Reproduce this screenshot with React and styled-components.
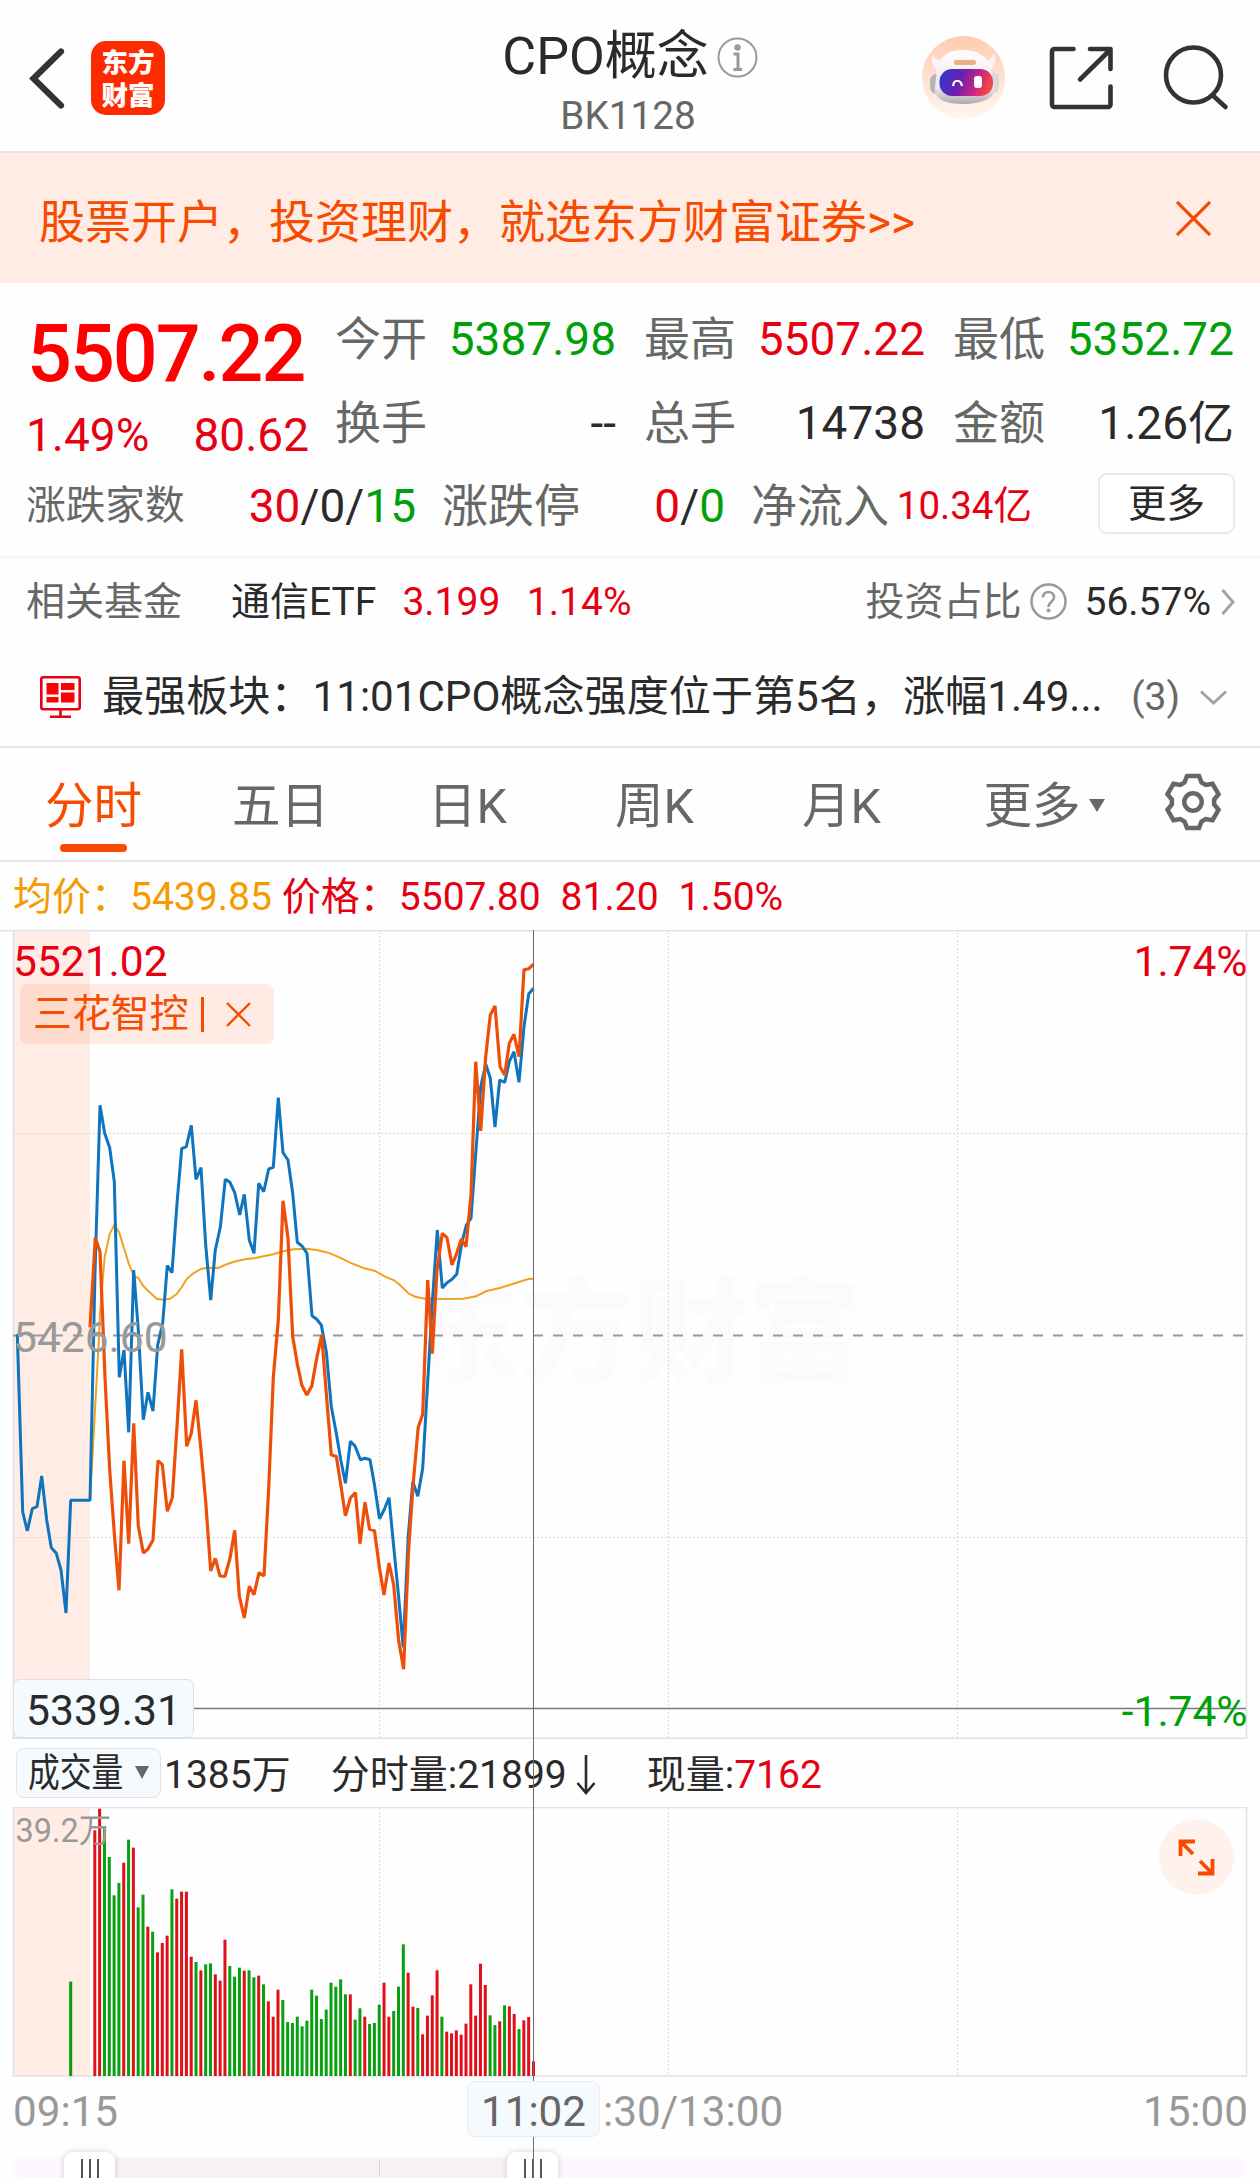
import React from "react";
import styled, { createGlobalStyle } from "styled-components";

const RED = "#e60012";
const GREEN = "#00a00a";
const ORANGE = "#f64b00";
const INK = "#2a2a2a";
const GREY = "#666866";
const MUTE = "#999999";

const Global = createGlobalStyle`
  * { box-sizing: border-box; }
  html, body { margin: 0; padding: 0; background: #fefefe; }
  body { font-family: Roboto, "Noto Sans CJK SC", sans-serif; color: ${INK}; }
`;

const Page = styled.main`
  width: 1260px;
  height: 2178px;
  overflow: hidden;
  background: #fefefe;
  display: flex;
  flex-direction: column;
`;

/* ---------- header ---------- */
const Header = styled.header`
  height: 153px;
  flex: none;
  border-bottom: 2px solid #e6e4e6;
  display: grid;
  grid-template-columns: 400px 1fr 400px;
`;
const HeaderLeft = styled.div`
  display: flex;
  align-items: center;
  padding: 4px 0 0 28px;
  gap: 25px;
`;
const Logo = styled.div`
  width: 74px;
  height: 74px;
  border-radius: 15px;
  background: #ff2a00;
  color: #fff;
  font: 900 26.5px/33px Roboto, "Noto Sans CJK SC", sans-serif;
  text-align: center;
  padding-top: 5px;
`;
const HeaderTitle = styled.div`
  display: flex;
  flex-direction: column;
  align-items: center;
  padding-top: 27px;
`;
const TitleLine = styled.div`
  display: flex;
  align-items: center;
  gap: 8px;
  font-size: 52px;
  line-height: 60px;
`;
const Code = styled.div`
  font-size: 38.7px;
  line-height: 48px;
  color: ${GREY};
  margin-top: 5px;
  padding-right: 4px;
`;
const HeaderRight = styled.div`
  display: flex;
  align-items: center;
  justify-content: flex-end;
  padding: 4px 29.5px 0 0;
`;

/* ---------- promotion banner ---------- */
const Banner = styled.div`
  height: 130px;
  flex: none;
  background: #ffede5;
  color: ${ORANGE};
  display: flex;
  align-items: center;
  justify-content: space-between;
  padding: 0 49px 0 39px;
  font-size: 46px;
  line-height: 60px;
`;
const BannerText = styled.span`
  padding-top: 7px;
`;

/* ---------- quote ---------- */
const Quote = styled.section`
  height: 275px;
  flex: none;
  border-bottom: 2px solid #f5f5f6;
  padding: 14px 25px 0 26px;
`;
const QuoteTop = styled.div`
  display: grid;
  grid-template-columns: 309px 1fr;
`;
const Latest = styled.div`
  width: 283px;
`;
const Price = styled.div`
  color: #ff0000;
  font-size: 79px;
  font-weight: 500;
  line-height: 80px;
  letter-spacing: -2px;
  margin-top: 17px;
  padding-left: 1px;
`;
const Change = styled.div`
  display: flex;
  justify-content: space-between;
  color: ${RED};
  font-size: 46px;
  line-height: 60px;
  margin-top: 11px;
`;
const Stats = styled.div`
  display: grid;
  grid-template-columns: repeat(3, 281px);
  column-gap: 28px;
`;
const Stat = styled.div`
  display: flex;
  justify-content: space-between;
  align-items: center;
  font-size: 46px;
  line-height: 82px;
`;
const Label = styled.span`
  color: ${GREY};
  font-size: ${(p) => p.$size || 46}px;
`;
const Value = styled.span`
  color: ${(p) => p.$color || INK};
  font-size: ${(p) => p.$size || 46}px;
`;
const QuoteBottom = styled.div`
  display: grid;
  grid-template-columns: 390px 283px 281px 1fr;
  column-gap: 26px;
`;
const MoreButton = styled.button`
  justify-self: end;
  width: 137px;
  height: 61px;
  margin: 8px 0 0;
  padding: 0;
  border: 2px solid #e9e9ec;
  border-radius: 9px;
  background: #fff;
  color: ${INK};
  font: 38.5px/57px Roboto, "Noto Sans CJK SC", sans-serif;
`;

/* ---------- related fund and news rows ---------- */
const FundRow = styled.div`
  height: 86px;
  flex: none;
  display: flex;
  align-items: center;
  padding: 1px 25px 0 26px;
  font-size: 39px;
  line-height: 60px;
`;
const FundName = styled.span`
  margin: 0 26px 0 49px;
`;
const FundFigures = styled.span`
  display: flex;
  gap: 26.5px;
  color: ${RED};
`;
const FundShare = styled.span`
  margin-left: auto;
  display: flex;
  align-items: center;
`;
const ShareValue = styled.span`
  margin: 0 10px 0 17px;
`;
const NewsRow = styled.div`
  height: 104px;
  flex: none;
  border-bottom: 2px solid #e5e5e8;
  display: flex;
  align-items: center;
  padding: 4px 33px 0 40px;
  font-size: 42.12px;
  line-height: 60px;
  white-space: nowrap;
`;
const NewsText = styled.span`
  margin-left: 21px;
`;
const NewsCount = styled.span`
  margin: 0 20px 0 auto;
  font-size: 39px;
  color: ${GREY};
`;

/* ---------- tabs ---------- */
const Tabs = styled.nav`
  height: 114px;
  flex: none;
  border-bottom: 2px solid #e5e5e8;
  display: grid;
  grid-template-columns: repeat(6, 187px) 140px;
`;
const Tab = styled.div`
  position: relative;
  display: flex;
  align-items: center;
  justify-content: center;
  gap: 8px;
  padding: 5px 0 0 ${(p) => p.$indent || 0}px;
  font-size: 48.5px;
  line-height: 60px;
  color: ${(p) => (p.$active ? ORANGE : GREY)};
  &::after {
    content: "";
    display: ${(p) => (p.$active ? "block" : "none")};
    position: absolute;
    left: 60px;
    bottom: 8px;
    width: 67px;
    height: 8px;
    border-radius: 4px;
    background: ${ORANGE};
  }
`;
const Triangle = styled.i`
  width: 0;
  height: 0;
  border: ${(p) => p.$half}px solid transparent;
  border-top: 13px solid ${GREY};
  border-bottom: 0;
  margin-bottom: ${(p) => p.$lift || 0}px;
`;
const GearSlot = styled.div`
  padding: 24px 0 0 41px;
  line-height: 0;
`;

/* ---------- chart ---------- */
const InfoLine = styled.div`
  height: 68px;
  flex: none;
  display: flex;
  align-items: center;
  gap: 20px;
  padding: 1px 0 0 13px;
  font-size: 39px;
  line-height: 60px;
  color: ${RED};
`;
const Average = styled.span`
  color: #f59a00;
  margin-right: -10px;
`;
const Charts = styled.section`
  position: relative;
  flex: 1;
`;
const Plot = styled.div`
  position: relative;
  height: ${(p) => p.$height}px;
`;
const Drawing = styled.svg`
  display: block;
`;
const AxisLabel = styled.span`
  position: absolute;
  top: ${(p) => p.$top}px;
  ${(p) => (p.$right ? "right: 12.5px;" : `left: ${p.$left || 13}px;`)}
  color: ${(p) => p.$color};
  font-size: ${(p) => p.$size || 42.5}px;
  line-height: 50px;
`;
const Watermark = styled.span`
  position: absolute;
  left: 406px;
  top: 324px;
  font: 900 114px/140px "Noto Sans CJK SC", sans-serif;
  color: #fdfafd;
`;
const StockTag = styled.div`
  position: absolute;
  left: 20px;
  top: 54px;
  width: 254px;
  height: 60px;
  border-radius: 7px;
  background: rgba(255, 70, 0, 0.1);
  color: ${ORANGE};
  display: flex;
  align-items: center;
  padding: 0 23px 0 13px;
  font-size: 38.9px;
  line-height: 56px;
  justify-content: space-between;
`;
const TagBar = styled.i`
  width: 3px;
  height: 35px;
  background: ${ORANGE};
  margin-right: 10px;
`;
const CrossPrice = styled.div`
  position: absolute;
  left: 13px;
  top: 749px;
  width: 181px;
  height: 59px;
  border: 1px solid #dcdfe8;
  border-radius: 7px;
  background: #f5faff;
  padding-left: 12px;
  font-size: 42.6px;
  line-height: 60px;
`;
const CrossLine = styled.i`
  position: absolute;
  left: 532.5px;
  top: 0;
  bottom: 0;
  width: 1.5px;
  background: #6c6c6e;
`;
const VolumeHead = styled.div`
  height: 68px;
  display: flex;
  align-items: center;
  padding: 3px 0 0 16px;
  font-size: 39px;
  line-height: 60px;
`;
const Picker = styled.div`
  width: 145px;
  height: 50px;
  border: 1px solid #dfe2ea;
  border-radius: 8px;
  background: #f5faff;
  display: flex;
  align-items: center;
  justify-content: space-between;
  padding: 0 11px 0 11px;
  margin-top: -4px;
`;
const PickerText = styled.span`
  width: 95px;
  white-space: nowrap;
  transform: scaleX(0.815);
  transform-origin: left;
`;
const VolumeText = styled.span`
  display: flex;
  align-items: center;
  margin-left: ${(p) => p.$gap}px;
`;
const Expand = styled.svg`
  position: absolute;
  left: 1159px;
  top: 12px;
`;
const TimeAxis = styled.div`
  height: 69px;
  display: flex;
  padding: 0 12px 0 13px;
  font-size: 42.2px;
  line-height: 69px;
  color: ${MUTE};
`;
const StartTime = styled.span`
  width: 454px;
`;
const EndTime = styled.span`
  margin-left: auto;
`;
const CrossTime = styled.div`
  position: relative;
  z-index: 2;
  width: 133px;
  height: 56px;
  margin: 4px 3px 0 0;
  border: 1px solid #e8ecf4;
  border-radius: 8px;
  background: #f5faff;
  color: #666;
  text-align: center;
  line-height: 60px;
`;
const Slider = styled.div`
  position: relative;
  height: 32px;
  overflow: hidden;
`;
const Track = styled.div`
  margin: 11px 13px 0;
  height: 21px;
  border-radius: 9px;
  background: #fdf8fd;
  padding: 4px 0 0 77px;
`;
const Range = styled.div`
  width: 443px;
  height: 21px;
  margin-top: -4px;
  background: #f6f2f6;
  padding: 4px 0 0 289px;
`;
const Tick = styled.div`
  width: 1px;
  height: 14px;
  background: #d5d2d6;
`;
const Handle = styled.div`
  position: absolute;
  left: ${(p) => p.$left}px;
  top: 6px;
  width: 51px;
  height: 50px;
  border-radius: 9px;
  background: #fff;
  box-shadow: 0 0 6px rgba(60, 50, 80, 0.22);
  display: flex;
  justify-content: center;
  gap: 6px;
  padding-top: 7px;
`;
const Grip = styled.i`
  width: 2px;
  height: 19px;
  background: #555;
`;

/* ---------- data ---------- */
const BLUE_LINE = [17.3,1334,22.7,1512,27.3,1531,32.3,1508.7,37,1506.7,41.7,1476,46.7,1520,51.3,1547.7,56.3,1553.3,61,1570,66,1613,70.7,1500.3,90,1500.3,95,1273,100,1105.3,104.7,1133.3,109.7,1147.7,114.3,1181.7,119.3,1377.3,124,1350,128.7,1432.3,133.7,1270,138.3,1330,143.3,1419.7,148,1392.3,153,1411,157.7,1345,162.7,1323,167.3,1265.7,172,1272.7,177,1203.3,181.7,1148.7,186.3,1146.7,191.3,1125.3,196,1179.3,201,1167.7,205.7,1245,210.7,1300,215.3,1250,220.3,1227.3,225.3,1179.3,230,1182.3,234.7,1192.7,239.7,1215,244.3,1194.3,249.3,1240,254,1253.3,258.7,1183.3,263.7,1191.7,268.7,1169,273.3,1167.3,278.3,1097.7,283,1152.7,288,1160,292.7,1193.3,297.3,1242.3,302,1246,307,1253.3,312,1315.7,316.7,1319.3,321.3,1325,326.3,1351.7,331.3,1406.7,336.3,1433.3,340.8,1460,345.4,1483.3,350.4,1441.3,355,1446,360.4,1459.7,365,1458.3,370,1459.7,374.5,1485,379.5,1518.7,384,1510,389,1497.7,393.7,1546.7,398.3,1593.3,403.2,1647.3,408.2,1536.7,412.8,1481.7,417.8,1496.3,422.7,1468.3,427.3,1388.3,432.3,1303,437.3,1230,442.3,1288,447,1282.7,452,1279.3,456.7,1274.3,461.7,1243.3,466.3,1225,471,1218.3,476,1150,480.7,1086.7,485.7,1064,490.3,1078.3,495,1127,499.7,1080,504.7,1082.3,509.3,1061.7,514,1051.7,519,1082.3,524,1026.7,528.7,994,533.5,988.3];
const ORANGE_LINE = [90,1327.3,95.3,1237.7,100,1251.7,105,1377.3,109.7,1470,114.3,1533.3,119,1590.3,124,1460.7,128.7,1543.7,133.7,1423.3,138.3,1526,143.3,1553,148,1549,153,1540,158,1460.7,162.3,1464.7,167.3,1511.3,172.3,1497.7,177,1426.7,181.7,1349.3,186.7,1446.3,191.3,1433.3,196,1400.3,201,1450,205.7,1501.7,210.7,1571,215.3,1558.3,220,1576,225,1576.3,230,1558.3,234.7,1530.3,239.3,1596,244.3,1618,249.3,1586.3,254,1594.7,259,1572.7,264,1576,268.7,1488.3,273.3,1377.3,278.3,1320,283,1200.7,288,1238.3,292.7,1336.7,297.2,1363.3,301.8,1385,306.8,1395,311.8,1386,316.7,1358.3,321.7,1335,326.3,1393.3,331.3,1455,336.3,1456.3,340.8,1485,345.4,1515.7,350.4,1498,355.4,1492.7,360,1543.7,365,1502.3,369.6,1529.3,374.5,1530.7,379.5,1568.3,384,1595,389,1563,393.7,1585,398.6,1640,403.6,1669.3,408.6,1550,413.2,1483.3,418.2,1427.3,422.7,1414.3,427.7,1280,432.3,1353.7,437,1270,442.3,1233.3,447,1237.7,452,1265,456.7,1253.3,461.3,1239,466,1246.7,471,1195,475.7,1061.7,480.7,1131,485.7,1056.7,490.3,1015,495,1006,500,1066.7,504.7,1075,509.3,1043.3,514,1034.3,519,1056.7,524,969.7,528.7,968.7,533.5,964.3];
const AVERAGE_LINE = [90,1500,95,1410,99,1337,100,1313,102.7,1280,104.7,1256.7,109.7,1234,114.3,1224.7,119.3,1232.7,124,1248.3,128.7,1263.3,133.7,1276,138.3,1278,143.3,1286,148,1290.7,156.7,1298.7,162.7,1299.7,170,1298.7,176.7,1294,181.7,1287.3,186.7,1279,193.3,1273.3,201,1269,206.7,1267.7,218.3,1268,226.7,1264.3,236.7,1261,246.7,1259,254,1258.3,263.3,1256.3,273.3,1254.3,283.3,1251.3,293.3,1249.3,306.7,1248.7,316.7,1250,328.3,1252.7,340,1257.7,350,1262.7,363.3,1268,375,1271,385,1276.7,394,1280.3,400,1285,408.3,1293.3,415,1296.7,426.7,1299,463.3,1298.7,476,1296.3,486.7,1291,500,1288,513.3,1283.7,528.3,1279,533.5,1278.7];

/* one entry per minute: direction letter and bar height in thirds of a pixel */
const VOLUMES = "r737 r802 g745 g657 g542 g579 r640 g709 r685 g506 g544 r448 g433 r371 r399 r421 g560 r532 r553 r553 r358 g342 r317 g335 g338 r305 r286 r409 g330 g298 g325 r316 g317 g296 r301 g275 r224 r178 r259 g228 g162 g159 g178 g149 g166 g259 g241 g171 g199 g280 g268 g290 g245 r245 g169 g203 r178 g156 g159 g214 r280 r178 g195 g268 g395 r310 r208 g204 r125 r181 r242 r317 g178 r133 r128 r137 r124 r157 r275 r181 r337 r273 g182 g153 r164 g212 r209 r186 g141 r167 r177 r44"
  .split(" ")
  .map((v) => ({ up: v[0] === "r", h: Number(v.slice(1)) / 3 }));

const GRID_X = [379.5, 668.5, 957.5];

/* ---------- icons ---------- */
const BackIcon = () => (
  <svg width="38" height="64" viewBox="28 46 38 64" fill="none" stroke="#333" strokeWidth="6.2" strokeLinecap="round">
    <path d="M61 51.5 33.5 78.5 61 105.5" />
  </svg>
);

const InfoIcon = () => (
  <svg width="41" height="41" viewBox="0 0 41 41" fill="none" stroke="#999" strokeWidth="2">
    <circle cx="20.5" cy="20.5" r="19" />
    <circle cx="20.5" cy="10.5" r="3.2" fill="#999" stroke="none" />
    <path d="M16.5 17h4.5v15M16.5 32.5h8.5" strokeWidth="3" />
  </svg>
);

const HeaderIcons = () => (
  <svg width="312" height="90" viewBox="918 33 312 90" fill="none">
    <defs>
      <linearGradient id="halo" x1="0" y1="0" x2="0" y2="1">
        <stop offset="0" stopColor="#ffcbb0" />
        <stop offset="1" stopColor="#fff6f2" />
      </linearGradient>
      <linearGradient id="visor" x1="0" y1="0" x2="1" y2="0.2">
        <stop offset="0" stopColor="#2b3bd0" />
        <stop offset="0.45" stopColor="#6a1fb0" />
        <stop offset="0.8" stopColor="#d3267e" />
        <stop offset="1" stopColor="#f04646" />
      </linearGradient>
      <linearGradient id="shell" x1="0" y1="0" x2="0" y2="1">
        <stop offset="0" stopColor="#fffdfc" />
        <stop offset="0.7" stopColor="#ede7eb" />
        <stop offset="1" stopColor="#b0a8b0" />
      </linearGradient>
    </defs>
    <circle cx="962.5" cy="77.5" r="41.5" fill="url(#halo)" />
    <path d="M932 54c-3 8 0 16 8 17l7-10c-7 1-13-1-15-7ZM993 53c3 8 1 15-6 18l-8-10c7 1 12-2 14-8Z" fill="#faf3f2" />
    <rect x="929" y="74" width="13" height="20" rx="6.5" fill="#b9b2ba" />
    <rect x="986" y="72" width="12" height="21" rx="6" fill="#dcd5da" />
    <path d="M935.500 75c0-17 10-25 26.500-25s28 8 29 25l2.500 16c-2 8-14 13-31 13s-26.500-4-29-13Z" fill="url(#shell)" />
    <rect x="953" y="60" width="22" height="5" rx="2.500" fill="#eeae84" />
    <rect x="938.500" y="69" width="53.500" height="27" rx="12.500" fill="url(#visor)" />
    <path d="M952 86c1-7 7.500-7 9 0" stroke="#fff" strokeWidth="2.200" />
    <rect x="973" y="76" width="8" height="12" rx="3" fill="#fff" />
    <g stroke="#333" strokeWidth="4.600" strokeLinecap="round" strokeLinejoin="round">
      <path d="M1072.500 49h-19a2.500 2.500 0 0 0-2.500 2.500v53a2.500 2.500 0 0 0 2.500 2.500h53.500a2.500 2.500 0 0 0 2.500-2.500V86.500M1089 49h20.500v20M1109 50 1079 79.500" />
      <circle cx="1192.500" cy="75" r="27.500" />
      <path d="M1213 96.500 1224.500 107" />
    </g>
  </svg>
);

const Cross = ({ size, weight }) => (
  <svg width={size} height={size} viewBox={`0 0 ${size} ${size}`} stroke={ORANGE} strokeWidth={weight}>
    <path d={`M1 1 ${size - 1} ${size - 1}M${size - 1} 1 1 ${size - 1}`} />
  </svg>
);

const HelpMark = styled.svg`
  margin-left: 9px;
`;
const HelpIcon = () => (
  <HelpMark width="37" height="37" viewBox="0 0 37 37" fill="none" stroke="#999" strokeWidth="2.500">
    <circle cx="18.500" cy="18.500" r="17" />
    <path d="M13 14.500c0-7.500 11-7.500 11 0 0 4.500-5.500 4-5.500 9.500" />
    <circle cx="18.500" cy="27.500" r="2" fill="#999" stroke="none" />
  </HelpMark>
);

const BoardIcon = () => (
  <svg width="41" height="43" viewBox="0 0 41 43" fill="none" stroke={RED} strokeWidth="2.600">
    <rect x="1.300" y="1.300" width="38.400" height="32" rx="2" />
    <path d="M20.500 33v7M10 40.800h21" />
    <path d="M6.500 7h12v11.500h-12zM21 7h13.500v7H21zM6.500 21h12v5.500h-12zM21 16.500h13.500v10H21z" fill="#ff0000" stroke="none" />
  </svg>
);

const Chevron = ({ d, w, h }) => (
  <svg width={w} height={h} viewBox={`0 0 ${w} ${h}`} fill="none" stroke="#a2a2a2" strokeWidth="2.900">
    <path d={d} />
  </svg>
);

const DownArrow = styled.svg`
  margin-left: 9px;
`;

const gearPath = (() => {
  const tooth = [[-8.500, -19.500], [-6, -26], [6, -26], [8.500, -19.500]];
  const points = [];
  for (let k = 0; k < 6; k += 1) {
    const a = (k * Math.PI) / 3;
    tooth.forEach(([x, y]) => {
      points.push(`${(x * Math.cos(a) - y * Math.sin(a)).toFixed(2)} ${(x * Math.sin(a) + y * Math.cos(a)).toFixed(2)}`);
    });
  }
  return `M${points.join("L")}Z`;
})();

const GearIcon = () => (
  <svg width="60" height="60" viewBox="-30 -30 60 60" fill="none" stroke={GREY} strokeWidth="4.500">
    <path d={gearPath} />
    <circle r="8.700" />
  </svg>
);

/* ---------- drawings ---------- */
const PriceChart = () => (
  <Drawing width="1260" height="809" viewBox="0 930 1260 809" fill="none">
    <rect x="13" y="932" width="77" height="806" fill="#ffede5" />
    <g stroke="#d9d9db" strokeWidth="1" strokeDasharray="2 2">
      {GRID_X.map((x) => (
        <path key={x} d={`M${x} 932V1738`} />
      ))}
      <path d="M13 1133.500H1246M13 1537.500H1246" />
    </g>
    <path d="M0 930.700H1260" stroke="#e2e2e4" strokeWidth="1.500" />
    <path d="M13.500 931V1738.300H1246.500V931" stroke="#e0dfe1" strokeWidth="1.500" />
    <path d="M13 1335.500H1246" stroke="#999" strokeWidth="2" strokeDasharray="10 10" />
    <path d="M194 1708.500H1246" stroke="#7a7a7c" strokeWidth="1.500" />
    <polyline points={AVERAGE_LINE.join(" ")} stroke="#f0a21c" strokeWidth="2" />
    <polyline points={BLUE_LINE.join(" ")} stroke="#0f74bd" strokeWidth="3" strokeLinejoin="bevel" />
    <polyline points={ORANGE_LINE.join(" ")} stroke="#ee4f08" strokeWidth="3.200" strokeLinejoin="bevel" />
  </Drawing>
);

const VolumeChart = () => (
  <Drawing width="1260" height="270" viewBox="0 1807 1260 270" fill="none">
    <rect x="13" y="1807" width="77" height="269" fill="#ffede5" />
    <g stroke="#d9d9db" strokeWidth="1" strokeDasharray="2 2">
      {GRID_X.map((x) => (
        <path key={x} d={`M${x} 1808V2075`} />
      ))}
    </g>
    <rect x="13.500" y="1807.500" width="1233" height="268.500" stroke="#e2e0e2" strokeWidth="1.500" />
    <rect x="69.200" y="1981.500" width="3" height="94.500" fill={GREEN} />
    {VOLUMES.map((v, i) => (
      <rect key={i} x={93.300 + i * 4.8206} y={2076 - v.h} width="3" height={v.h} fill={v.up ? "#e01018" : "#08a010"} />
    ))}
  </Drawing>
);

export default function App() {
  return (
    <Page>
      <Global />
      <Header>
        <HeaderLeft>
          <BackIcon />
          <Logo>
            东方
            <br />
            财富
          </Logo>
        </HeaderLeft>
        <HeaderTitle>
          <TitleLine>
            CPO概念
            <InfoIcon />
          </TitleLine>
          <Code>BK1128</Code>
        </HeaderTitle>
        <HeaderRight>
          <HeaderIcons />
        </HeaderRight>
      </Header>

      <Banner>
        <BannerText>股票开户，投资理财，就选东方财富证券&gt;&gt;</BannerText>
        <Cross size={35} weight={3.2} />
      </Banner>

      <Quote>
        <QuoteTop>
          <Latest>
            <Price>5507.22</Price>
            <Change>
              <span>1.49%</span>
              <span>80.62</span>
            </Change>
          </Latest>
          <Stats>
            <Stat><Label>今开</Label><Value $color={GREEN}>5387.98</Value></Stat>
            <Stat><Label>最高</Label><Value $color={RED}>5507.22</Value></Stat>
            <Stat><Label>最低</Label><Value $color={GREEN}>5352.72</Value></Stat>
            <Stat><Label>换手</Label><Value>--</Value></Stat>
            <Stat><Label>总手</Label><Value>14738</Value></Stat>
            <Stat><Label>金额</Label><Value>1.26亿</Value></Stat>
          </Stats>
        </QuoteTop>
        <QuoteBottom>
          <Stat>
            <Label $size={39.7}>涨跌家数</Label>
            <span>
              <Value $color={RED}>30</Value>/0/<Value $color={GREEN}>15</Value>
            </span>
          </Stat>
          <Stat>
            <Label>涨跌停</Label>
            <span>
              <Value $color={RED}>0</Value>/<Value $color={GREEN}>0</Value>
            </span>
          </Stat>
          <Stat>
            <Label>净流入</Label>
            <Value $color={RED} $size={38.5}>10.34亿</Value>
          </Stat>
          <MoreButton>更多</MoreButton>
        </QuoteBottom>
      </Quote>

      <FundRow>
        <Label $size={39}>相关基金</Label>
        <FundName>通信ETF</FundName>
        <FundFigures>
          <span>3.199</span>
          <span>1.14%</span>
        </FundFigures>
        <FundShare>
          <Label $size={39}>投资占比</Label>
          <HelpIcon />
          <ShareValue>56.57%</ShareValue>
          <Chevron w={14} h={26} d="M1.500 1 12 13 1.500 25" />
        </FundShare>
      </FundRow>

      <NewsRow>
        <BoardIcon />
        <NewsText>最强板块：11:01CPO概念强度位于第5名，涨幅1.49...</NewsText>
        <NewsCount>(3)</NewsCount>
        <Chevron w={27} h={15} d="M1 1.500 13.500 13 26 1.500" />
      </NewsRow>

      <Tabs>
        <Tab $active>分时</Tab>
        <Tab>五日</Tab>
        <Tab>日K</Tab>
        <Tab>周K</Tab>
        <Tab>月K</Tab>
        <Tab $indent={31}>
          更多
          <Triangle $half={8} $lift={3} />
        </Tab>
        <GearSlot>
          <GearIcon />
        </GearSlot>
      </Tabs>

      <InfoLine>
        <Average>均价：5439.85</Average>
        <span>价格：5507.80</span>
        <span>81.20</span>
        <span>1.50%</span>
      </InfoLine>

      <Charts>
        <Plot $height={809}>
          <Watermark>东方财富</Watermark>
          <Plot $height={809}>
            <PriceChart />
          </Plot>
          <AxisLabel $top={7} $color={RED}>5521.02</AxisLabel>
          <AxisLabel $top={7} $color={RED} $right>1.74%</AxisLabel>
          <AxisLabel $top={382.5} $color={MUTE}>5426.60</AxisLabel>
          <AxisLabel $top={757} $color={GREEN} $right>-1.74%</AxisLabel>
          <StockTag>
            三花智控
            <TagBar />
            <Cross size={25} weight={2.4} />
          </StockTag>
          <CrossPrice>5339.31</CrossPrice>
        </Plot>

        <VolumeHead>
          <Picker>
            <PickerText>成交量</PickerText>
            <Triangle $half={7.5} />
          </Picker>
          <VolumeText $gap={3}>1385万</VolumeText>
          <VolumeText $gap={40}>
            分时量:21899
            <DownArrow width="20" height="40" viewBox="0 0 20 40" fill="none" stroke={INK} strokeWidth="2.600">
              <path d="M10 0V38M1.500 28 10 38 18.500 28" />
            </DownArrow>
          </VolumeText>
          <VolumeText $gap={51}>
            现量:<Value $color={RED} $size={39}>7162</Value>
          </VolumeText>
        </VolumeHead>

        <Plot $height={270}>
          <VolumeChart />
          <AxisLabel $top={-1} $left={15.5} $color={MUTE} $size={32.4}>39.2万</AxisLabel>
          <Expand width="76" height="76" viewBox="1159 1819 76 76" fill="none">
            <circle cx="1196.500" cy="1857" r="37.500" fill="#fff1ec" />
            <path d="M1195 1841.500H1180.500V1856M1181 1842 1193 1854M1198 1873.500H1212.500V1859M1212 1873 1200 1861" stroke={ORANGE} strokeWidth="3.800" />
          </Expand>
        </Plot>

        <TimeAxis>
          <StartTime>09:15</StartTime>
          <CrossTime>11:02</CrossTime>
          <span>:30/13:00</span>
          <EndTime>15:00</EndTime>
        </TimeAxis>

        <Slider>
          <Track>
            <Range>
              <Tick />
            </Range>
          </Track>
          <Handle $left={64}><Grip /><Grip /><Grip /></Handle>
          <Handle $left={507}><Grip /><Grip /><Grip /></Handle>
        </Slider>
        <CrossLine />
      </Charts>
    </Page>
  );
}
